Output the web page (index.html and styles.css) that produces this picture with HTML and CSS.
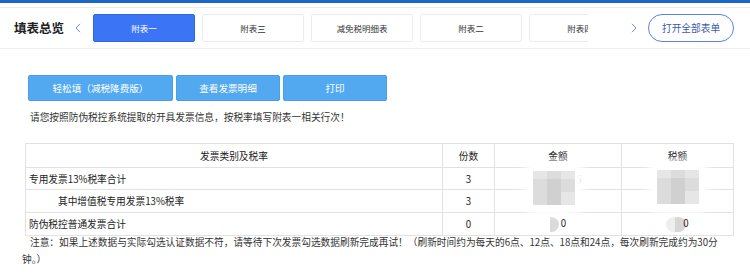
FILE: index.html
```html
<!DOCTYPE html>
<html lang="zh">
<head>
<meta charset="utf-8">
<link rel="stylesheet" href="styles.css">
</head>
<body>
<div class="topbar"></div>
<header class="header">
  <h1 class="title">填表总览</h1>
  <svg class="chev chev-left" width="6" height="10" viewBox="0 0 6 10"><polyline points="5,0.8 1,5 5,9.2" fill="none" stroke="#6a8bdc" stroke-width="1"/></svg>
  <div class="tabs">
    <div class="tab active">附表一</div>
    <div class="tab">附表三</div>
    <div class="tab">减免税明细表</div>
    <div class="tab">附表二</div>
    <div class="tab">附表四</div>
  </div>
  <svg class="chev chev-right" width="6" height="10" viewBox="0 0 6 10"><polyline points="1,0.8 5,5 1,9.2" fill="none" stroke="#6a8bdc" stroke-width="1"/></svg>
  <button class="open-all">打开全部表单</button>
</header>
<main class="content">
  <div class="actions">
    <button class="btn w1">轻松填（减税降费版）</button>
    <button class="btn w2">查看发票明细</button>
    <button class="btn w3">打印</button>
  </div>
  <p class="hint">请您按照防伪税控系统提取的开具发票信息，按税率填写附表一相关行次！</p>
  <div class="table-wrap">
    <table class="grid">
      <colgroup><col class="c1"><col class="c2"><col class="c3"><col class="c4"></colgroup>
      <tr class="r1"><th>发票类别及税率</th><th>份数</th><th>金额</th><th>税额</th></tr>
      <tr class="r2"><td class="left">专用发票13%税率合计</td><td>3</td><td class="amt"><span class="peek">5</span></td><td></td></tr>
      <tr class="r3"><td class="left indent">其中增值税专用发票13%税率</td><td>3</td><td></td><td></td></tr>
      <tr class="r4"><td class="left">防伪税控普通发票合计</td><td>0</td><td><span class="blob b1"></span>0</td><td><span class="blob b2"></span>0</td></tr>
    </table>
    <div class="mosaic m-amt">
      <i class="t1"></i><i class="t2"></i><i class="t1"></i>
      <i class="t2"></i><i class="t3"></i><i class="t2"></i>
      <i class="t2"></i><i class="t3"></i><i class="t1"></i>
    </div>
    <div class="mosaic m-tax">
      <i class="t1"></i><i class="t2"></i><i class="t1"></i>
      <i class="t2"></i><i class="t3"></i><i class="t2"></i>
      <i class="t2"></i><i class="t3"></i><i class="t1"></i>
    </div>
  </div>
  <p class="note">注意：如果上述数据与实际勾选认证数据不符，请等待下次发票勾选数据刷新完成再试！（刷新时间约为每天的6点、12点、18点和24点，每次刷新完成约为30分钟。）</p>
</main>
</body>
</html>
```
FILE: styles.css
```css
* { box-sizing: border-box; }
html, body { margin: 0; padding: 0; background: #fff; }
body {
  width: 750px;
  height: 275px;
  overflow: hidden;
  font-family: "Noto Sans CJK SC", "Noto Sans", sans-serif;
  color: #333;
}
.topbar { height: 3px; background: #1b66c8; }
.header {
  margin-top: 4px;
  height: 42px;
  border-top: 1px solid #ececec;
  border-bottom: 1px solid #f0f0f0;
  display: flex;
  align-items: center;
  padding-left: 14px;
}
.title {
  margin: 0;
  font-size: 12.5px;
  font-weight: bold;
  color: #222;
  line-height: 16px;
  white-space: nowrap;
}
.chev { display: block; flex: none; }
.chev-left { margin-left: 11px; }
.tabs {
  margin-left: 12px;
  width: 495px;
  overflow: hidden;
  display: flex;
  gap: 7px;
  flex: none;
}
.tab {
  flex: none;
  width: 102px;
  height: 28px;
  border: 1px solid #ececec;
  border-radius: 2px;
  background: #fff;
  font-size: 8.5px;
  color: #333;
  display: flex;
  align-items: center;
  justify-content: center;
  white-space: nowrap;
}
.tab.active {
  background: #3b75f6;
  border-color: #2e66e3;
  color: #fff;
}
.chev-right { margin-left: 43px; }
.open-all {
  margin-left: 11px;
  width: 86px;
  height: 28px;
  border: 1px solid #5a82dc;
  border-radius: 14px;
  background: #fff;
  color: #3c5aab;
  font-family: inherit;
  font-size: 9.7px;
  padding: 0;
}
.content { padding-top: 26px; }
.actions {
  display: flex;
  gap: 3px;
  padding-left: 28px;
}
.btn {
  height: 26px;
  border: 1px solid #45a0ec;
  border-radius: 2px;
  background: #52a9f0;
  color: #fff;
  font-family: inherit;
  font-size: 9.6px;
  padding: 0;
}
.w1 { width: 145px; }
.w2 { width: 104px; }
.w3 { width: 104px; }
.hint {
  margin: 8px 0 0 30px;
  font-size: 9.7px;
  line-height: 16px;
  color: #333;
}
.table-wrap {
  position: relative;
  margin: 18px 0 0 25px;
  width: 708px;
}
.grid {
  border-collapse: collapse;
  width: 708px;
  table-layout: fixed;
  font-size: 9.7px;
  color: #222;
}
.c1 { width: 417px; }
.c2 { width: 52px; }
.c3 { width: 127px; }
.c4 { width: 112px; }
.grid th, .grid td {
  border: 1px solid #e2e2e2;
  padding: 0;
  text-align: center;
  font-weight: normal;
  white-space: nowrap;
}
.r1 { height: 24px; }
.r2 { height: 22px; }
.r3 { height: 23px; }
.r4 { height: 23px; }
.grid td.left { text-align: left; padding-left: 3px; }
.grid td.indent { padding-left: 32px; }
.amt { text-align: center; }
.peek { display: inline-block; margin-left: 42px; }
.blob {
  display: inline-block;
  vertical-align: middle;
  height: 15px;
  background: #d9d9d9;
  border-radius: 0 8px 8px 0;
  margin-right: 2px;
}
.b1 { width: 9px; background: #dadada; }
.b2 { width: 20px; border-radius: 10px; background: linear-gradient(90deg, #eeeeee 0 45%, #d6d6d6 45% 100%); margin-right: -3px; }
.mosaic {
  position: absolute;
  display: grid;
  grid-template-columns: repeat(3, 14px);
  grid-template-rows: 8px 13px 13px;
  background: #fff;
  box-shadow: 0 0 6px 10px rgba(255,255,255,0.97);
  border-radius: 4px;
}
.mosaic i { display: block; }
.t1 { background: #e6e6e6; }
.t2 { background: #dcdcdc; }
.t3 { background: #d0d0d0; }
.m-amt { left: 508px; top: 28px; }
.m-tax { left: 632px; top: 27px; }
.note {
  margin: -2px 0 0 22px;
  width: 702px;
  font-size: 9.7px;
  line-height: 16.5px;
  text-indent: 8px;
  color: #333;
}
```
